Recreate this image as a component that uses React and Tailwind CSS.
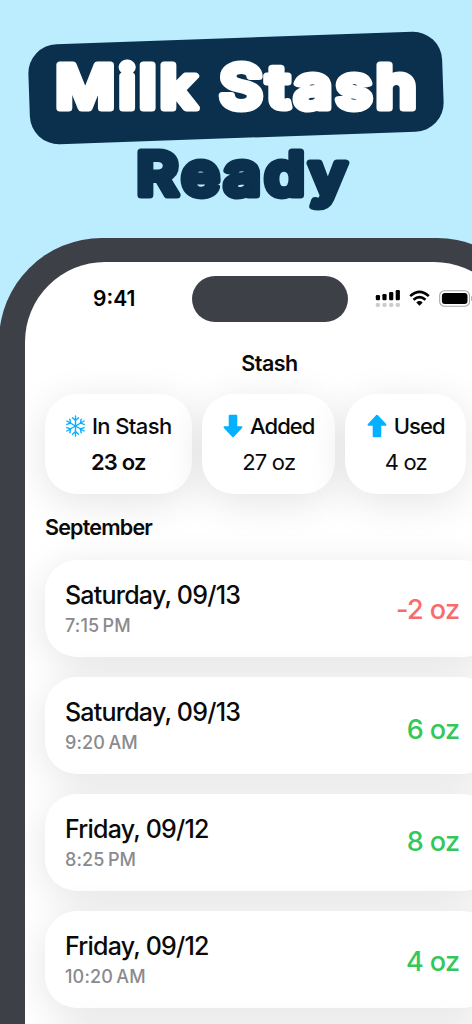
import React from 'react';

const entries = [
  { day: 'Saturday, 09/13', time: '7:15\u2009PM', amount: '-2 oz', color: 'text-[#fa6a6b]', offset: 'pt-[2px]' },
  { day: 'Saturday, 09/13', time: '9:20\u2009AM', amount: '6 oz', color: 'text-[#34c759]', offset: 'pt-[9px]' },
  { day: 'Friday, 09/12', time: '8:25\u2009PM', amount: '8 oz', color: 'text-[#34c759]', offset: 'pb-[2px]' },
  { day: 'Friday, 09/12', time: '10:20\u2009AM', amount: '4 oz', color: 'text-[#34c759]', offset: 'pt-[4px]' },
];

const SnowflakeIcon = () => (
  <svg className="w-[21px] h-[22px] shrink-0" viewBox="-10.5 -11 21 22" fill="none" stroke="#05b1ff" strokeWidth="1.4" strokeLinecap="round" strokeLinejoin="round">
    {[0, 60, 120, 180, 240, 300].map((angle) => (
      <path key={angle} transform={`rotate(${angle})`} d="M0 0V-10M-3 -8.3L0 -5.6L3 -8.3" />
    ))}
  </svg>
);

const ArrowIcon = ({ up }) => (
  <svg className={up ? 'w-5 h-6 shrink-0' : 'w-5 h-6 shrink-0 rotate-180'} viewBox="0 0 20 24">
    <path
      fill="#05b1ff"
      stroke="#05b1ff"
      strokeWidth="2"
      strokeLinejoin="round"
      d="M10 1.7L18.4 10.8H13.3V22.2H6.7V10.8H1.6Z"
    />
  </svg>
);

const StatusIcons = () => (
  <svg className="w-[98px] h-5 shrink-0" viewBox="0 0 98 20">
    {/* cellular */}
    <g fill="#000">
      <rect x="0.8" y="6" width="4.2" height="5.2" rx="1.2" />
      <rect x="7.4" y="5" width="4.2" height="6.2" rx="1.2" />
      <rect x="14.1" y="3" width="4.2" height="8.2" rx="1.2" />
      <rect x="20.7" y="1" width="4.2" height="10.2" rx="1.2" />
    </g>
    <g fill="#ccc">
      <rect x="0.8" y="14" width="4.2" height="4" rx="1.4" />
      <rect x="7.4" y="14" width="4.2" height="4" rx="1.4" />
      <rect x="14.1" y="14" width="4.2" height="4" rx="1.4" />
      <rect x="20.7" y="14" width="4.2" height="4" rx="1.4" />
    </g>
    {/* wifi */}
    <g fill="none" stroke="#000" strokeWidth="2.6">
      <path d="M35.2 7.1Q44.5 -1.4 53.8 7.1" />
      <path d="M38.5 10.7Q44.5 5.4 50.5 10.7" />
    </g>
    <path d="M41.3 13.4Q44.5 10.8 47.7 13.4L44.5 16.7Z" fill="#000" />
    {/* battery */}
    <rect x="64.7" y="1.7" width="29.8" height="15.6" rx="4.8" fill="none" stroke="#a6a6a6" strokeWidth="1.1" />
    <rect x="66.9" y="3.9" width="25.6" height="11.2" rx="3" fill="#000" />
    <path d="M96 7Q98 7.6 98 9.5Q98 11.4 96 12Z" fill="#b5b5b5" />
  </svg>
);

const StatCard = ({ width, icon, label, value, bold }) => (
  <div className={`${width} h-[100px] shrink-0 rounded-[32px] bg-white pt-[17px] flex flex-col items-center shadow-[0_8px_40px_rgba(0,0,0,0.11)]`}>
    <div className={`flex items-center h-[30px] text-[22px] font-medium whitespace-nowrap ${bold ? 'gap-1.5 tracking-[-0.6px]' : 'gap-[7px] pl-px tracking-[-0.9px]'}`}>
      {icon}
      {label}
    </div>
    <div className={`h-[30px] mt-[6px] leading-[30px] text-[22px] ${bold ? 'font-semibold tracking-[-0.8px]' : 'pl-px font-normal tracking-[-0.8px]'}`}>{value}</div>
  </div>
);

const EntryRow = ({ entry }) => (
  <div className="h-[97px] rounded-[32px] bg-white pl-5 pr-[34.5px] flex items-center justify-between shadow-[0_8px_40px_rgba(0,0,0,0.11)]">
    <div>
      <div className="text-[25px] leading-[34px] font-[450] tracking-[-0.78px]">{entry.day}</div>
      <div className="text-[18px] leading-[28px] font-medium tracking-[0.15px] text-[#8a8a8e]">{entry.time}</div>
    </div>
    <div className={`text-[27px] leading-[34px] font-medium tracking-[-0.6px] ${entry.color} ${entry.offset}`}>{entry.amount}</div>
  </div>
);

// Round-joined stroke gives the display lettering its soft corners
const RoundedWords = ({ words, color, className }) => (
  <svg className={className} fill={color} stroke={color} strokeWidth="7" strokeLinejoin="round" strokeLinecap="round">
    {words.map((word) => (
      <text
        key={word.text}
        x={word.x}
        y={word.y}
        textLength={word.length}
        lengthAdjust="spacingAndGlyphs"
        letterSpacing="3.5"
        fontSize="59"
        fontWeight="570"
      >
        {word.text}
      </text>
    ))}
  </svg>
);

const Headline = () => (
  <div className="h-[238px] w-[472px] pt-[38px] flex flex-col items-center">
    <div className="w-[414px] h-[100px] shrink-0 rounded-[29px] bg-[#0a304d] -rotate-2 flex items-center justify-center">
      <h1 className="rotate-2">
        <RoundedWords
          className="w-[380px] h-[80px]"
          color="#fff"
          words={[
            { text: 'Milk', x: 9.5, y: 59.5, length: 145 },
            { text: 'Stash', x: 173.5, y: 59.5, length: 201 },
          ]}
        />
      </h1>
    </div>
    <h1 className="mt-[-7px]">
      <RoundedWords className="w-[240px] h-[90px]" color="#0a304d" words={[{ text: 'Ready', x: 20.5, y: 64, length: 214 }]} />
    </h1>
  </div>
);

const App = () => {
  return (
    <div className="w-[472px] h-[1024px] overflow-hidden bg-[#bbedff] text-[#0a0a0a] font-['Inter','Liberation_Sans',sans-serif]">
      <Headline />

      <div className="w-[541px] -ml-px h-[900px] rounded-t-[103px] bg-[#3d4046] pt-6 px-[26px]">
        <div className="h-[876px] rounded-t-[80px] bg-white overflow-hidden">
          {/* status bar */}
          <div className="h-[74px] flex items-center pl-[68px]">
            <div className="w-[98.5px] text-[21px] font-semibold text-black">9:41</div>
            <div className="w-[156px] h-[46px] mr-[27px] rounded-full bg-[#3d4046] shrink-0" />
            <StatusIcons />
          </div>

          <div className="h-[58px] pt-[11px] text-center text-[21.5px] leading-[32px] font-semibold tracking-[-0.5px]">Stash</div>

          <div className="flex gap-[10px] pl-5">
            <StatCard width="w-[146.5px]" icon={<SnowflakeIcon />} label="In Stash" value="23 oz" bold />
            <StatCard width="w-[133.5px]" icon={<ArrowIcon />} label="Added" value="27 oz" />
            <StatCard width="w-[120.5px]" icon={<ArrowIcon up />} label="Used" value="4 oz" />
          </div>

          <h2 className="h-[66px] pt-[18px] pl-5 text-[21.5px] leading-[30px] font-semibold tracking-[-0.8px]">September</h2>

          <div className="flex flex-col gap-5 px-5">
            {entries.map((entry, i) => (
              <EntryRow key={i} entry={entry} />
            ))}
            <div className="h-[97px] rounded-[32px] bg-white shadow-[0_8px_40px_rgba(0,0,0,0.11)]" />
          </div>
        </div>
      </div>
    </div>
  );
};

export default App;
